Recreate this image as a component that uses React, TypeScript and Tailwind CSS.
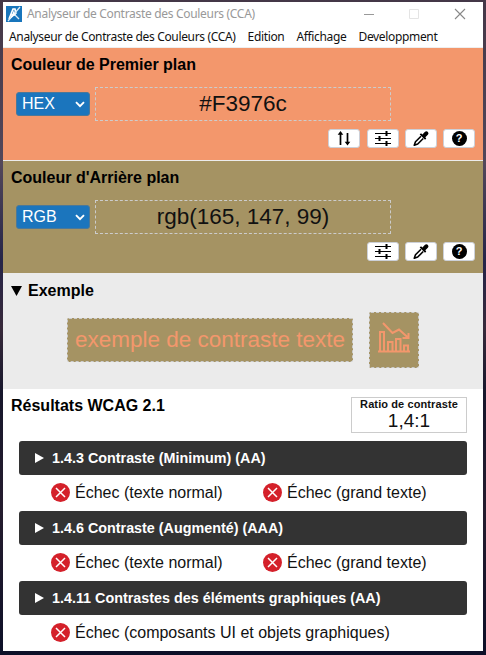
import type { ReactNode } from "react";

const Swap = () => (
  <svg width="14" height="15" viewBox="0 0 14 15" fill="none" stroke="#000" strokeWidth="1.7">
    <path d="M3.500 14V2.500M10.500 2v10" />
    <path d="M3.500 0 6.300 3.800H.7zM10.500 14.500 7.700 10.700h5.600z" fill="#000" stroke="none" />
  </svg>
);

const Sliders = () => (
  <svg width="16" height="15" viewBox="0 0 16 15" fill="none" stroke="#000">
    <path d="M0 2.500h16M0 7.500h16M0 12.500h16" strokeWidth="1.100" />
    <path d="M11.500 0v5M4.500 5v5M11.500 10v5" strokeWidth="2" />
  </svg>
);

const Dropper = () => (
  <svg width="16" height="15" viewBox="0 0 16 16">
    <path d="M8 5.600 2.100 11.500 .8 15.200 4.500 13.900 10.400 8" fill="none" stroke="#000" strokeWidth="1.700" strokeLinejoin="round" />
    <path d="M6.600 3.600 8 2.500 9.500 3.700 12 1.100C13.200-.1 14.700.300 15.300 1c.8.9.9 2 0 3.100L12.600 6.700 13.600 8l-1.300 1.300z" fill="#000" />
  </svg>
);

const Help = () => (
  <span className="flex size-[15px] items-center justify-center rounded-full bg-black text-[11px] leading-none font-bold text-white">?</span>
);

const ToolButton = ({ children }: { children: ReactNode }) => (
  <button className="flex h-[19px] w-8 items-center justify-center rounded-[3px] border border-[#ccd0d8] bg-white">{children}</button>
);

interface PanelProps {
  title: string;
  format: string;
  value: string;
  tone: string;
  swap?: boolean;
}

const ColorPanel = ({ title, format, value, tone, swap }: PanelProps) => (
  <section className={`h-[112px] shrink-0 ${tone}`}>
    <h2 className="h-[39px] pt-[7px] pl-2 text-[16px] leading-5 font-bold text-black">{title}</h2>
    <div className="flex h-[34px] items-center pl-[13px]">
      <div className="flex h-6 w-[74px] items-center justify-between rounded-[3px] border border-[#4b7899] bg-[#1b75bd] pr-1 pl-[5px] text-[16px] text-white">
        <span>{format}</span>
        <svg width="10" height="7" viewBox="0 0 10 7" fill="none" stroke="#fff" strokeWidth="1.900">
          <path d="m1 1.200 4 4 4-4" />
        </svg>
      </div>
      <div className="ml-[5px] flex h-[34px] w-[296px] items-center justify-center border border-dashed border-[#ccc] pb-px text-[22.500px] text-[#111]">
        {value}
      </div>
    </div>
    <div className="mt-2 flex h-5 justify-end pr-2">
      <div className="flex gap-[6px]">
        {swap && <div className="mr-px"><ToolButton><Swap /></ToolButton></div>}
        <ToolButton><Sliders /></ToolButton>
        <ToolButton><Dropper /></ToolButton>
        <ToolButton><Help /></ToolButton>
      </div>
    </div>
  </section>
);

const Fail = ({ label, className = "" }: { label: string; className?: string }) => (
  <div className={`flex items-center gap-[5px] ${className}`}>
    <svg className="mb-px shrink-0" width="19" height="19" viewBox="0 0 19 19">
      <circle cx="9.500" cy="9.500" r="9.500" fill="#d4202a" />
      <path d="m5 5 9 9M14 5l-9 9" stroke="#fff" strokeWidth="1.500" />
    </svg>
    <span className="text-[16px] leading-5 whitespace-nowrap text-[#111]">{label}</span>
  </div>
);

const Criterion = ({ label }: { label: string }) => (
  <div className="flex h-[34px] w-[448px] items-center gap-2 rounded-[3px] bg-[#333] pl-4 text-white">
    <svg width="9" height="10" viewBox="0 0 9 10"><path d="M0 0 9 5 0 10z" fill="#fff" /></svg>
    <span className="text-[14.350px] leading-4 font-bold">{label}</span>
  </div>
);

export default function App() {
  return (
    <div className="flex h-[655px] w-[486px] flex-col bg-[linear-gradient(#443747,#52475a_25%,#252448_40%,#37293a_50%,#17172c_60%,#251c2e_78%,#0d1028)] pt-[2px] pr-[3px] pb-1 pl-[3px] font-['Liberation_Sans',Arial,sans-serif]">
      <main className="flex h-[649px] w-[480px] flex-col overflow-hidden bg-white">
        <header className="flex h-6 shrink-0 items-center pl-[3px] font-['Noto_Sans',sans-serif]">
          <svg width="16" height="16" viewBox="0 0 16 16">
            <path d="M0 0h16v16H0z" fill="#1875bc" />
            <path d="m3 13 4-10h2l1 5m-5 1h5" fill="none" stroke="#fff" strokeWidth="1.600" />
            <path d="M14 1 8 8l-6 7M9 9l4 4" stroke="#d9eaf6" strokeWidth="1.300" />
            <path d="m4 13 4-9 1 5z" fill="#fff" />
          </svg>
          <span className="ml-[5px] w-[230px] text-[12px] tracking-[-0.310px] whitespace-nowrap text-[#999]">Analyseur de Contraste des Couleurs (CCA)</span>
          <div className="ml-[107px] flex items-center">
            <svg width="102" height="12" viewBox="0 0 102 12" fill="none">
              <path d="M0 6.500h10" stroke="#999" />
              <path d="M45.500 1.500h9v9h-9z" stroke="#e4e4e4" />
              <path d="m91 1 10 10M101 1 91 11" stroke="#888" strokeWidth="1.100" />
            </svg>
          </div>
        </header>
        <nav className="flex h-[22px] shrink-0 items-center gap-3 border-b border-[#eee] pl-[6px] font-['Noto_Sans',sans-serif] text-[12px] tracking-[-0.340px] whitespace-nowrap text-[#111]">
          <span>Analyseur de Contraste des Couleurs (CCA)</span>
          <span>Edition</span>
          <span>Affichage</span>
          <span>Developpment</span>
        </nav>
        <ColorPanel title="Couleur de Premier plan" format="HEX" value="#F3976c" tone="bg-[#f3976c]" swap />
        <div className="h-px shrink-0 bg-[#ececec]" />
        <ColorPanel title="Couleur d'Arrière plan" format="RGB" value="rgb(165, 147, 99)" tone="bg-[#a59363]" />
        <section className="h-[116px] shrink-0 bg-[#ebebeb]">
          <div className="flex h-[35px] items-center gap-[6px] pl-2">
            <svg width="11" height="10" viewBox="0 0 11 10"><path d="M0 0h11L5.500 10z" /></svg>
            <h2 className="text-[16px] font-bold">Exemple</h2>
          </div>
          <div className="flex h-16 items-center pl-16">
            <div className="flex h-11 w-[286px] items-center justify-center rounded-[2px] border border-dashed border-[#ccc] bg-[#a59363] text-[22.500px] whitespace-nowrap text-[#f3976c]">exemple de contraste texte</div>
            <div className="ml-4 flex h-14 w-[50px] items-center justify-center rounded-[2px] border border-dashed border-[#ccc] bg-[#a59363] pb-1.5">
              <svg width="32" height="31" viewBox="0 0 32 31" fill="none" stroke="#f3976c" strokeWidth="2">
                <path d="M0 29.500h32M2 29.500V10h4v19.500M10 29.500V20h4.500v9.500M18 29.500V17h4.500v12.500M26 29.500v-6h4v6" />
                <path d="m5 1 9.500 10L21 7.500l9.500 8.500M30.500 11v5h-6" />
              </svg>
            </div>
          </div>
        </section>
        <section className="flex grow flex-col pl-4">
          <div className="-ml-2 flex h-[52px] items-start justify-between pr-4">
            <h2 className="pt-[7px] text-[16px] leading-5 font-bold">Résultats WCAG 2.1</h2>
            <div className="mt-2 flex h-9 w-[116px] flex-col items-center border border-[#ccc] text-[#111]">
              <span className="text-[11px] leading-3 font-bold tracking-[0.100px] whitespace-nowrap">Ratio de contraste</span>
              <span className="pt-px text-[19px] leading-5">1,4:1</span>
            </div>
          </div>
          <Criterion label="1.4.3 Contraste (Minimum) (AA)" />
          <div className="flex h-9 items-center pl-8">
            <Fail label="Échec (texte normal)" className="w-[212px]" />
            <Fail label="Échec (grand texte)" />
          </div>
          <Criterion label="1.4.6 Contraste (Augmenté) (AAA)" />
          <div className="flex h-9 items-center pl-8">
            <Fail label="Échec (texte normal)" className="w-[212px]" />
            <Fail label="Échec (grand texte)" />
          </div>
          <Criterion label="1.4.11 Contrastes des éléments graphiques (AA)" />
          <div className="flex h-9 items-center pl-8">
            <Fail label="Échec (composants UI et objets graphiques)" />
          </div>
        </section>
      </main>
    </div>
  );
}
